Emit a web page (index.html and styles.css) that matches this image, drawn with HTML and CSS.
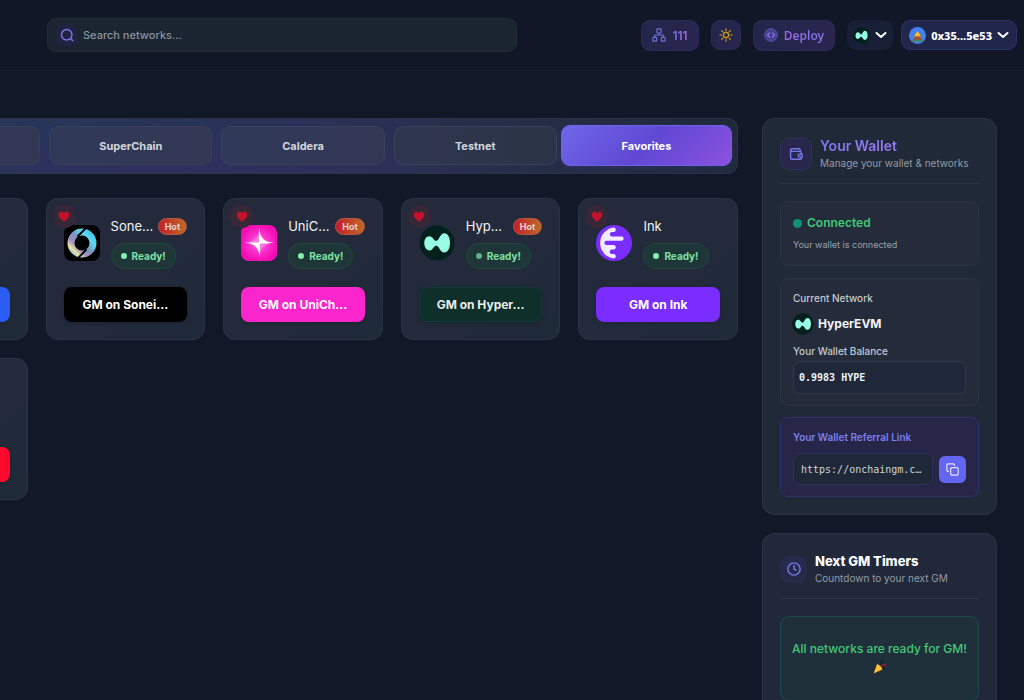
FILE: index.html
```html
<!DOCTYPE html>
<html lang="en">
<head>
<meta charset="utf-8">
<title>Networks</title>
<link rel="stylesheet" href="styles.css">
</head>
<body>
<svg class="defs" aria-hidden="true">
  <defs>
    <linearGradient id="ring" x1="1" y1="0" x2="0" y2="1">
      <stop offset="0" stop-color="#3fc4f0"/><stop offset=".25" stop-color="#5fd8f0"/><stop offset=".5" stop-color="#7b93c0"/><stop offset=".7" stop-color="#a58fc0"/><stop offset=".86" stop-color="#e8e6a0"/><stop offset="1" stop-color="#7cb8e8"/>
    </linearGradient>
    <radialGradient id="pink"><stop offset="0" stop-color="#ff8be6"/><stop offset=".5" stop-color="#f932cf"/><stop offset="1" stop-color="#f50db4"/></radialGradient>
    <symbol id="hyper" viewBox="0 0 36 36">
      <circle cx="18" cy="18" r="17.5" fill="#04201c"/>
      <path d="M31 17.700c0 5.800-2.400 9.800-5.600 9.800-4.400 0-5-6.800-8.200-6.800-2.700 0-3.200 4.700-6.600 4.700-3.500 0-5.300-3.600-5.300-7.400 0-4 2-6.800 5-6.800 3.700 0 4.300 4.600 6.900 4.600 3 0 3.600-7.600 8.200-7.600 3.200 0 5.600 3.900 5.600 9.500z" fill="#97fce4"/>
    </symbol>
    <symbol id="heart" viewBox="0 0 24 24"><path d="M12 21.500C5 15.500 1.500 12.300 1.500 8A5.500 5.500 0 0 1 12 5a5.500 5.500 0 0 1 10.500 3c0 4.300-3.500 7.500-10.500 13.500z" fill="#c5112b"/></symbol>
    <symbol id="chevron" viewBox="0 0 12 8"><path d="M1.500 2 6 6l4.500-4" fill="none" stroke="#fff" stroke-width="2" stroke-linecap="round" stroke-linejoin="round"/></symbol>
  </defs>
</svg>

<header class="topbar">
  <label class="search">
    <span class="search-icon"><svg width="14" height="14" viewBox="0 0 24 24" fill="none" stroke="#7477e8" stroke-width="2.500" stroke-linecap="round"><circle cx="11.500" cy="11.500" r="9"/><path d="m18 18 4 4"/></svg></span>
    <input class="search-input" type="text" placeholder="Search networks..." aria-label="Search networks...">
  </label>
  <div class="actions">
    <button class="chip">
      <svg width="14" height="14" viewBox="0 0 24 24" fill="none" stroke="#7072d8" stroke-width="2" stroke-linejoin="round"><rect x="8.500" y="1.500" width="7" height="7" rx="1"/><rect x="1.500" y="16" width="6.500" height="6.500" rx="1"/><rect x="16" y="16" width="6.500" height="6.500" rx="1"/><path d="M12 8.500V12M4.750 16v-4h14.500v4"/></svg>
      <span class="count">111</span>
    </button>
    <button class="chip chip-square" aria-label="Theme"><svg width="14" height="14" viewBox="0 0 24 24" fill="none" stroke="#cfa21c" stroke-width="2" stroke-linecap="round"><circle cx="12" cy="12" r="4.500"/><path d="M12 1.500v3M12 19.500v3M1.500 12h3M19.500 12h3M4.600 4.600l2.100 2.100M17.300 17.300l2.100 2.100M4.600 19.400l2.100-2.100M17.300 6.700l2.100-2.100"/></svg></button>
    <button class="chip">
      <svg width="14" height="14" viewBox="0 0 24 24" fill="none" stroke-linecap="round" stroke-linejoin="round"><circle cx="12" cy="12" r="11" fill="#45408f" stroke="#5a52b0" stroke-width="1.500"/><path d="m9.500 8.500-3.500 3.500 3.500 3.500M14.500 8.500l3.500 3.500-3.500 3.500" stroke="#9a6fe8" stroke-width="2"/></svg>
      <span class="deploy">Deploy</span>
    </button>
    <button class="chain" aria-label="HyperEVM"><svg width="17" height="17"><use href="#hyper"/></svg><svg width="12" height="8"><use href="#chevron"/></svg></button>
    <button class="account">
      <svg width="17" height="17" viewBox="0 0 17 17"><circle cx="8.500" cy="8.500" r="8.500" fill="#4580f0"/><path d="M8.500 4.200 13 11H4z" fill="#ffb51a"/><path d="M5.700 8.600h5.600l2.500 5.200q.2.600-.6.600H3.800q-.8 0-.6-.6z" fill="#8f5a3c"/><path d="M8.500 4.200 5.600 8.800l1.400 1 1.500-1 1.500 1 1.400-1z" fill="#ffbf1f"/><path d="M3.600 13h9.800l.4.900q0 .5-.6.500H3.800q-.6 0-.6-.5z" fill="#3a8a72"/></svg>
      <span>0x35...5e53</span>
      <svg width="12" height="8"><use href="#chevron"/></svg>
    </button>
  </div>
</header>

<div class="page">
  <main class="content">
    <nav class="tabs">
      <button class="tab"></button>
      <button class="tab">SuperChain</button>
      <button class="tab">Caldera</button>
      <button class="tab">Testnet</button>
      <button class="tab tab-active">Favorites</button>
    </nav>

    <section class="cards">
      <article class="card"><button class="gm gm-blue"></button></article>

      <article class="card">
        <span class="fav"><svg width="12" height="12"><use href="#heart"/></svg></span>
        <div class="card-top">
          <svg class="logo" viewBox="0 0 36 36"><rect width="36" height="36" rx="8" fill="#000"/><circle cx="18" cy="18" r="11" fill="none" stroke="url(#ring)" stroke-width="7"/><path d="m22.500 2.500-9 9M13.500 33.500l9-9" stroke="#000" stroke-width="1.800"/></svg>
          <div class="info">
            <div class="title-row"><h3 class="name">Sone...</h3><span class="hot">Hot</span></div>
            <span class="ready"><i class="dot"></i>Ready!</span>
          </div>
        </div>
        <button class="gm gm-black">GM on Sonei...</button>
      </article>

      <article class="card">
        <span class="fav"><svg width="12" height="12"><use href="#heart"/></svg></span>
        <div class="card-top">
          <svg class="logo" viewBox="0 0 36 36"><rect width="36" height="36" rx="8" fill="url(#pink)"/><path d="M18.500 3c.3 9.500 4.500 14.300 14.500 14.700-10 .4-14.200 5-14.500 14.800-.3-9.800-5-14.400-15-14.800 10-.4 14.700-5.200 15-14.700z" fill="#fff"/><path d="M18 4v13.500H5c8-.8 12.300-5 13-13.500zM19 32V18.500h13c-8 .8-12.300 5-13 13.500z" fill="#f84fd6" opacity=".75"/></svg>
          <div class="info">
            <div class="title-row"><h3 class="name">UniC...</h3><span class="hot">Hot</span></div>
            <span class="ready"><i class="dot"></i>Ready!</span>
          </div>
        </div>
        <button class="gm gm-pink">GM on UniCh...</button>
      </article>

      <article class="card">
        <span class="fav"><svg width="12" height="12"><use href="#heart"/></svg></span>
        <div class="card-top">
          <svg class="logo"><use href="#hyper"/></svg>
          <div class="info">
            <div class="title-row"><h3 class="name">Hyp...</h3><span class="hot">Hot</span></div>
            <span class="ready"><i class="dot dot-dim"></i>Ready!</span>
          </div>
        </div>
        <button class="gm gm-green">GM on Hyper...</button>
      </article>

      <article class="card">
        <span class="fav"><svg width="12" height="12"><use href="#heart"/></svg></span>
        <div class="card-top">
          <svg class="logo" viewBox="0 0 36 36"><circle cx="18" cy="18" r="18" fill="#7b2dff"/><path d="M18 2.500A15.600 15.600 0 0 0 18 33.500a2.300 2.300 0 0 0 0-4.500h-2.500a2.300 2.300 0 0 1 0-4.500H18a2.300 2.300 0 0 0 0-4.500h-7.500a2.100 2.100 0 0 1 0-4.200H26a2.300 2.300 0 0 0 0-4.400H15.500a2.300 2.300 0 0 1 0-4.400H18a2.300 2.300 0 0 0 0-4.500z" fill="#f1ebff"/></svg>
          <div class="info">
            <div class="title-row"><h3 class="name">Ink</h3></div>
            <span class="ready"><i class="dot"></i>Ready!</span>
          </div>
        </div>
        <button class="gm gm-purple">GM on Ink</button>
      </article>

      <article class="card"><button class="gm gm-red"></button></article>
    </section>
  </main>

  <aside class="sidebar">
    <section class="panel">
      <div class="panel-head">
        <span class="head-icon"><svg width="14" height="14" viewBox="0 0 24 24" fill="none" stroke="#7477e8" stroke-width="2.500" stroke-linejoin="round"><path d="M19 7.500V4.500a1.500 1.500 0 0 0-1.500-1.500H5a2.250 2.250 0 0 0 0 4.500h14.500A1.500 1.500 0 0 1 21 9v3.500M2.750 5v14A2 2 0 0 0 5 21h14.500a1.500 1.500 0 0 0 1.500-1.500V17"/><path d="M22.500 12.500H18a2.250 2.250 0 0 0 0 4.500h4.500z"/></svg></span>
        <div><h2 class="panel-title title-gradient">Your Wallet</h2><p class="panel-sub">Manage your wallet &amp; networks</p></div>
      </div>
      <div class="box box-status">
        <p class="connected"><i class="status-dot"></i>Connected</p>
        <p class="small">Your wallet is connected</p>
      </div>
      <div class="box box-network">
        <p class="label">Current Network</p>
        <p class="network"><svg width="22" height="22"><use href="#hyper"/></svg>HyperEVM</p>
        <label class="label" for="balance">Your Wallet Balance</label>
        <input class="field balance" id="balance" value="0.9983 HYPE" readonly>
      </div>
      <div class="box box-referral">
        <label class="label label-violet" for="referral">Your Wallet Referral Link</label>
        <div class="copy-row">
          <input class="field referral" id="referral" value="https://onchaingm.c…" readonly>
          <button class="copy" aria-label="Copy"><svg width="13" height="13" viewBox="0 0 24 24" fill="none" stroke="#e4e4ff" stroke-width="2.200" stroke-linecap="round" stroke-linejoin="round"><rect x="8.500" y="8.500" width="14" height="14" rx="2.500"/><path d="M4.500 15.500H4A2.500 2.500 0 0 1 1.500 13V4A2.500 2.500 0 0 1 4 1.500h9A2.500 2.500 0 0 1 15.500 4v.5"/></svg></button>
        </div>
      </div>
    </section>

    <section class="panel panel-timers">
      <div class="panel-head head-timers">
        <span class="head-icon icon-plain"><svg width="14" height="14" viewBox="0 0 24 24" fill="none" stroke="#7477e8" stroke-width="2.500" stroke-linecap="round" stroke-linejoin="round"><circle cx="12" cy="12" r="10.500"/><path d="M12 6v6l3.500 2"/></svg></span>
        <div><h2 class="panel-title title-strong">Next GM Timers</h2><p class="panel-sub">Countdown to your next GM</p></div>
      </div>
      <div class="all-ready">
        <p>All networks are ready for GM!</p>
        <svg width="14" height="14" viewBox="0 0 14 14"><path d="M4.500 3 1 12.300q-.2.800.6.600L10.500 9z" fill="#ffc02e"/><path d="M4.500 3q4 1.500 6 6" fill="none" stroke="#2b1d14" stroke-width="1.600"/><path d="M6 4.500Q5.200 2 6.500.8" fill="none" stroke="#123c50" stroke-width="1.500"/><path d="M8.500 6.500q1-2.500 2.300-1.800T13.500 4" fill="none" stroke="#8a2038" stroke-width="1.500"/><path d="m9 8.500 3.500.5M8 3.500l2-2.500" stroke="#1d1820" stroke-width="1.300"/></svg>
      </div>
    </section>
  </aside>
</div>
</body>
</html>
```

FILE: styles.css
```css
* { box-sizing: border-box; }
body {
  margin: 0;
  min-height: 100vh;
  overflow: hidden;
  background: #111827;
  color: #f3f4f6;
  font-family: Inter, "Liberation Sans", sans-serif;
  font-size: 12px;
}
h2, h3, p { margin: 0; }
button, input { font: inherit; color: inherit; margin: 0; }
button { padding: 0; border: 1px solid transparent; cursor: pointer; }
svg { flex: none; display: block; }
.defs { position: absolute; width: 0; height: 0; }

/* Top bar */
.topbar {
  display: flex;
  align-items: center;
  justify-content: space-between;
  gap: 24px;
  height: 71px;
  padding: 0 7px 0 47px;
  background: #111726;
  border-bottom: 1px solid #181f2f;
}
.search {
  display: flex;
  align-items: center;
  gap: 5px;
  width: 470px;
  height: 34px;
  padding: 0 8px;
  background: #1b2431;
  border: 1px solid #222d3a;
  border-radius: 9px;
}
.search-icon {
  display: grid;
  place-items: center;
  flex: none;
  width: 22px;
  height: 22px;
  border-radius: 6px;
  background: #222341;
}
.search-input {
  flex: 1;
  min-width: 0;
  padding: 0;
  border: 0;
  outline: 0;
  background: none;
  font-weight: 500;
  font-size: 11px;
}
.search-input::placeholder { color: #8c939f; opacity: 1; }
.actions { display: flex; align-items: center; gap: 12px; font-family: "Noto Sans", sans-serif; }
.chip {
  display: flex;
  align-items: center;
  justify-content: center;
  gap: 6px;
  height: 31px;
  padding: 0 10px;
  border-color: #2b2a58;
  border-radius: 9px;
  background: linear-gradient(135deg, #22264a, #2a2550);
  font-size: 12px;
  font-weight: 600;
}
.chip-square { width: 30px; height: 30px; padding: 0; }
.count { font-family: Inter, sans-serif; color: transparent; background: linear-gradient(90deg, #7a72e0, #a068e0); background-clip: text; -webkit-background-clip: text; }
.deploy { color: transparent; background: linear-gradient(90deg, #9a63dc, #7a76ea); background-clip: text; -webkit-background-clip: text; }
.chain, .account {
  display: flex;
  align-items: center;
  gap: 5px;
  height: 30px;
  border-radius: 9px;
}
.chain { padding: 0 5px; background: #182038; }
.account {
  margin-left: -4px;
  padding: 0 7px;
  background: #20264c;
  border-color: #2c3068;
  color: #fff;
  font-size: 11px;
  font-weight: 800;
}

/* Page columns */
.page {
  display: flex;
  align-items: flex-start;
  gap: 24px;
  padding: 47px 27px 0 0;
}
.content { flex: 1; min-width: 0; margin-left: -132px; }
.sidebar { flex: none; width: 235px; display: grid; grid-template-columns: minmax(0, 1fr); gap: 18px; }

.tabs {
  display: flex;
  gap: 9px;
  padding: 7px 10px 8px 8px;
  border: 1px solid #2b3448;
  border-radius: 10px;
  background:
    radial-gradient(ellipse at 36% 80%, #2f305f 0, transparent 50%),
    linear-gradient(90deg, #27365a 10%, #2b315a 50%, #242d43 80%, #1f2937);
}
.tab {
  flex: 1;
  height: 39px;
  border-color: #384157;
  border-radius: 9px;
  background: linear-gradient(90deg, #31395a, #323854);
  color: #d3d6dc;
  font-size: 11px;
  font-weight: 700;
}
.tab:nth-child(4) { background: linear-gradient(90deg, #2f3650, #2b3446); }
.tab.tab-active {
  flex-basis: 10px;
  height: 41px;
  margin: -1px -5px;
  border-color: #6c62ec;
  background: linear-gradient(135deg, #6f68e8, #6048d4 50%, #8b52de);
  box-shadow: 0 2px 8px #4f46e533;
  color: #fff;
}

/* Network cards */
.cards { display: grid; grid-template-columns: repeat(5, 1fr); gap: 18px; margin-top: 24px; }
.card {
  position: relative;
  display: flex;
  flex-direction: column;
  height: 142px;
  padding: 18px 17px 17px;
  border: 1px solid #2b3446;
  border-radius: 12px;
  background: linear-gradient(135deg, #252a3b, #222a3b 60%, #1f2a39);
}
.fav {
  position: absolute;
  top: 6px;
  left: 6px;
  display: grid;
  place-items: center;
  width: 23px;
  height: 23px;
  border-radius: 50%;
  background: #382737;
}
.card-top { display: flex; gap: 11px; }
.logo { width: 36px; height: 36px; margin-top: 8px; }
.info { flex: 1; min-width: 0; }
.title-row { display: flex; align-items: center; justify-content: space-between; height: 19px; }
.name { font-size: 13px; font-weight: 400; line-height: 19px; color: #f3f4f6; }
.hot {
  height: 17px;
  padding: 0 6px;
  border: 1px solid #b5573a;
  border-radius: 9px;
  background: linear-gradient(90deg, #c41f2c, #bd6a28);
  color: #e6d3d0;
  font-size: 9px;
  font-weight: 700;
  line-height: 15px;
}
.ready {
  display: inline-flex;
  align-items: center;
  gap: 5px;
  height: 26px;
  margin-top: 7px;
  padding: 0 9px;
  border: 1px solid #204a3c;
  border-radius: 13px;
  background: #1f3639;
  color: #7ee2a4;
  font-size: 10px;
  font-weight: 700;
}
.dot { width: 6px; height: 6px; border-radius: 50%; background: #86efac; }
.dot-dim { background: #5fb285; }
.gm {
  width: 100%;
  height: 35px;
  margin-top: auto;
  border-radius: 8px;
  color: #fff;
  font-size: 12px;
  font-weight: 700;
  box-shadow: 0 1px 4px #0003;
}
.gm-blue { background: #2c5cf6; }
.gm-black { background: #000; }
.gm-pink { background: #fa25cc; }
.gm-green { background: #0e2f2a; border-color: #113c31; color: #e8eeec; }
.gm-purple { background: #7b2cff; }
.gm-red { background: #ff0a2c; }

/* Sidebar */
.panel {
  padding: 17px;
  border: 1px solid #2a3545;
  border-radius: 12px;
  background: linear-gradient(135deg, #1f2937, #202938);
}
.panel-timers { background: #20283a; height: 190px; }
.panel-head {
  display: flex;
  align-items: center;
  gap: 8px;
  height: 48px;
  padding-bottom: 12px;
  border-bottom: 1px solid #2d3647;
}
.head-timers { padding-bottom: 11px; }
.head-icon {
  display: grid;
  place-items: center;
  flex: none;
  width: 32px;
  height: 32px;
  border: 1px solid #33305f;
  border-radius: 9px;
  background: #28274b;
}
.icon-plain { width: 27px; height: 27px; border: 0; background: #272a4a; }
.panel-title { font-size: 14px; font-weight: 600; line-height: 18px; color: #fff; }
.title-strong { font-size: 13px; font-weight: 800; }
.title-gradient {
  width: fit-content;
  color: transparent;
  background: linear-gradient(90deg, #7d79ee, #9a7af5);
  background-clip: text;
  -webkit-background-clip: text;
}
.panel-sub { font-size: 10px; line-height: 16px; color: #949ba7; white-space: nowrap; }
.box {
  padding: 12px;
  border: 1px solid #2a3443;
  border-radius: 8px;
  background: #242c3b;
}
.box-status { margin-top: 17px; height: 65px; }
.box-network { margin-top: 12px; height: 128px; }
.box-referral { margin-top: 11px; height: 80px; background: #272648; border-color: #31306a; }
.connected { display: flex; align-items: center; gap: 5px; color: #3fc777; font-weight: 600; line-height: 18px; }
.status-dot { width: 9px; height: 9px; border-radius: 50%; background: #12916f; }
.small { margin-top: 6px; color: #9ba1ac; font-size: 9px; line-height: 14px; }
.label { display: block; color: #c5c9d1; font-size: 10px; font-weight: 500; line-height: 14px; }
.label-violet { color: #7d7ff0; font-weight: 600; }
.network { display: flex; align-items: center; gap: 4px; margin: 8px 0 9px -1px; color: #f3f4f6; font-weight: 700; line-height: 22px; }
.field {
  width: 100%;
  height: 33px;
  border: 1px solid #313b4b;
  border-radius: 7px;
  outline: 0;
  background: #1f2838;
  font-family: "DejaVu Sans Mono", monospace;
  font-size: 10px;
}
.balance { display: block; margin-top: 3px; padding: 0 5px; font-weight: 700; }
.copy-row { display: flex; align-items: center; gap: 6px; margin-top: 9px; }
.referral { flex: 1; min-width: 0; height: 32px; padding: 0 7px; border-color: #2f3359; color: #d1d5db; }
.copy {
  display: grid;
  place-items: center;
  flex: none;
  width: 27px;
  height: 27px;
  border-radius: 6px;
  background: #6366f1;
}
.all-ready {
  display: flex;
  flex-direction: column;
  align-items: center;
  gap: 4px;
  height: 85px;
  margin-top: 17px;
  padding-top: 23px;
  border: 1px solid #1c4a48;
  border-radius: 9px;
  background: #1f303b;
  color: #43c878;
  font-weight: 500;
  line-height: 18px;
  white-space: nowrap;
}
.all-ready svg { margin-top: -2px; }
```
